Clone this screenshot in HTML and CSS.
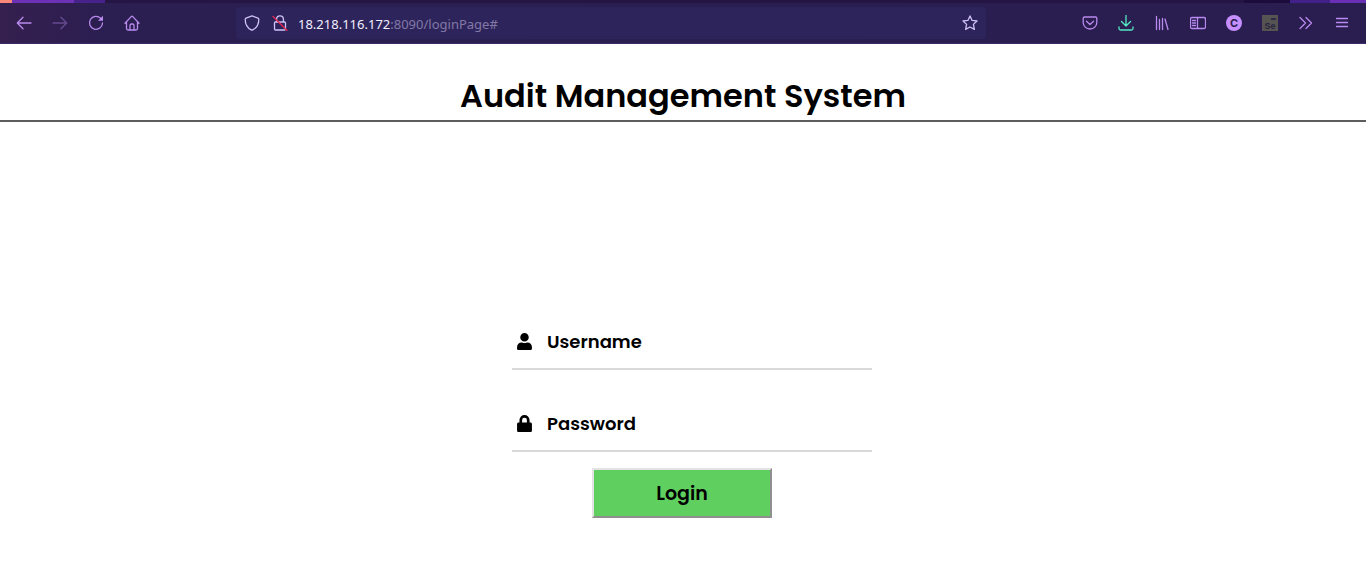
FILE: index.html
```
<!DOCTYPE html>
<html lang="en">
<head>
<meta charset="utf-8">
<meta name="viewport" content="width=device-width, initial-scale=1">
<title>Audit Management System</title>
<link rel="stylesheet" href="styles.css">
</head>
<body>
<nav class="browser" aria-label="Browser toolbar">
  <div class="tab-strip"></div>
  <div class="toolbar">
    <div class="tools">
      <button class="tool" type="button" aria-label="Back"><svg class="icon" viewBox="0 0 16 16"><path d="M15 8H1.500M7 2.300L1.300 8L7 13.700"/></svg></button>
      <button class="tool" type="button" aria-label="Forward" disabled><svg class="icon" viewBox="0 0 16 16"><path d="M1 8h13.500M9 2.300L14.700 8L9 13.700"/></svg></button>
      <button class="tool" type="button" aria-label="Reload"><svg class="icon" viewBox="0 0 16 16"><path d="M12.600 3.200A6.500 6.500 0 1 0 14.500 8"/><path class="solid" d="M15 .8v5h-5z"/></svg></button>
      <button class="tool" type="button" aria-label="Home"><svg class="icon" viewBox="0 0 16 16"><path d="M1 8.200L7.200 1.600q.8-.7 1.600 0L15 8.200M2.500 7v6.500q0 1.500 1.500 1.500h8q1.500 0 1.500-1.500V7M6 15v-4.500q0-1.500 1.500-1.500h1Q10 9 10 10.500V15"/></svg></button>
    </div>
    <div class="address">
      <div class="site-icons">
        <svg class="icon" viewBox="0 0 16 16"><path d="M8 .9l6 2.200q.8.3.8 1.100c0 5-2 8.600-6 10.600q-.8.4-1.600 0c-4-2-6-5.600-6-10.600q0-.8.8-1.100z"/></svg>
        <svg class="icon" viewBox="0 0 16 16"><path d="M4.600 7V4.200a3.400 3.400 0 0 1 6.800 0V7M3.500 7h9q1 0 1 1v6q0 1-1 1h-9q-1 0-1-1V8q0-1 1-1z"/><path class="strike" d="M1 1.500L15 15.500"/></svg>
      </div>
      <p class="url"><span class="host">18.218.116.172</span>:8090/loginPage#</p>
      <button class="star" type="button" aria-label="Bookmark this page"><svg class="icon" viewBox="0 0 16 16"><path d="M8 .9l2.100 4.500 4.900.6-3.600 3.400 1 5L8 12l-4.400 2.400 1-5L1 6l4.900-.6z"/></svg></button>
    </div>
    <div class="tools">
      <button class="tool" type="button" aria-label="Save to Pocket"><svg class="icon" viewBox="0 0 16 16"><path d="M2.500 2h11q1.300 0 1.300 1.300V7.500a6.800 6.500 0 0 1-13.600 0V3.300Q1.200 2 2.500 2zM4.500 6.200L8 9.500l3.500-3.300"/></svg></button>
      <button class="tool downloads" type="button" aria-label="Downloads"><svg class="icon" viewBox="0 0 16 16"><path d="M8 .5v10M3.500 6.500L8 11l4.500-4.500M1 12v1.500Q1 15 2.500 15h11q1.500 0 1.500-1.500V12"/></svg></button>
      <button class="tool" type="button" aria-label="Library"><svg class="icon" viewBox="0 0 16 16"><path d="M2.500 1.500v13M5.500 4.500v10M8.500 3.500v11M11 4L14 14.500"/></svg></button>
      <button class="tool" type="button" aria-label="Sidebars"><svg class="icon" viewBox="0 0 16 16"><path d="M2 2.500h12q1.500 0 1.500 1.500v8q0 1.500-1.500 1.500H2Q.5 13.500.5 12V4Q.5 2.500 2 2.500zM7.500 2.500v11M2.500 5.500h3M2.500 8h3M2.500 10.500h3"/></svg></button>
      <button class="tool" type="button" aria-label="Account"><span class="account">C</span></button>
      <button class="tool" type="button" aria-label="Selenium"><span class="selenium">Se</span></button>
      <button class="tool" type="button" aria-label="More tools"><svg class="icon" viewBox="0 0 16 16"><path d="M2 2.500l5.500 5.500L2 13.500M8 2.500l5.500 5.500L8 13.500"/></svg></button>
      <button class="tool" type="button" aria-label="Menu"><svg class="icon" viewBox="0 0 16 16"><path d="M2.500 3.500h11M2.500 7.500h11M2.500 11.500h11"/></svg></button>
    </div>
  </div>
</nav>
<header class="page-header"><h1 class="title">Audit Management System</h1></header>
<main class="page">
  <form class="login">
    <div class="field">
      <label for="username" aria-label="Username"><svg class="field-icon" viewBox="0 0 448 512"><path d="M224 256a128 128 0 1 0 0-256 128 128 0 0 0 0 256zm90 32h-17a174 174 0 0 1-146 0h-17C60 288 0 348 0 422v42c0 27 21 48 48 48h352c27 0 48-21 48-48v-42c0-74-60-134-134-134z"/></svg></label>
      <input class="entry" id="username" type="text" placeholder="Username">
    </div>
    <div class="field">
      <label for="password" aria-label="Password"><svg class="field-icon" viewBox="0 0 448 512"><path d="M400 224h-24v-72a152 152 0 0 0-304 0v72H48c-27 0-48 21-48 48v192c0 27 21 48 48 48h352c27 0 48-21 48-48V272c0-27-21-48-48-48zm-104 0H152v-72a72 72 0 0 1 144 0z"/></svg></label>
      <input class="entry" id="password" type="password" placeholder="Password">
    </div>
    <button class="submit" type="submit">Login</button>
  </form>
</main>
</body>
</html>
```
FILE: styles.css
```
* {
  box-sizing: border-box;
}

body {
  margin: 0;
  background: #fff;
  color: #000;
  font-family: Poppins, Inter, sans-serif;
}

button {
  padding: 0;
  border: 0;
  background: none;
  color: inherit;
}

.browser {
  color: #b98aef;
  background: linear-gradient(90deg, #35204f, #2b1e50 100px, #2a1d4f);
  border-bottom: 1px solid #3b2b68;
}

.tab-strip {
  height: 3px;
  background: linear-gradient(90deg, #fb8778 12px, #6c31b4 12px 74px, #47228a 74px 105px, #251545 105px calc(100% - 122px), #1c0c3d calc(100% - 122px) calc(100% - 76px), #42208a calc(100% - 76px) calc(100% - 36px), #6930b5 calc(100% - 36px));
}

.toolbar {
  display: flex;
  align-items: center;
  height: 40px;
  padding: 0 6px;
}

.tools {
  display: flex;
}

.tool {
  display: flex;
  align-items: center;
  justify-content: center;
  width: 36px;
  height: 32px;
}

.tool:disabled {
  opacity: 0.4;
}

.downloads {
  color: #54e8c4;
}

.icon {
  display: block;
  flex: none;
  width: 16px;
  height: 16px;
  fill: none;
  stroke: currentColor;
  stroke-width: 1.3;
  stroke-linecap: round;
  stroke-linejoin: round;
}

.solid {
  fill: currentColor;
  stroke: none;
}

.strike {
  stroke: #e22850;
}

.address {
  display: flex;
  flex: 1;
  align-items: center;
  gap: 10px;
  min-width: 0;
  height: 32px;
  margin: 0 86px;
  padding: 0 8px;
  border-radius: 4px;
  background: #2e245c;
  color: #cfc3f5;
}

.site-icons {
  display: flex;
  gap: 12px;
}

.url {
  flex: 1;
  margin: 0;
  padding-top: 2px;
  overflow: hidden;
  color: #8279a6;
  font: 13px/20px "Noto Sans", sans-serif;
  white-space: nowrap;
}

.host {
  color: #f2effc;
}

.account {
  width: 16px;
  height: 16px;
  border-radius: 50%;
  background: #c78eff;
  color: #2a1d4f;
  font: bold 11px/16px Inter, sans-serif;
}

.selenium {
  width: 16px;
  height: 16px;
  padding-top: 6px;
  background: linear-gradient(#302b45, #302b45) 9px 3px / 5px 2px no-repeat #565453;
  color: #282340;
  font: bold 9px/10px "Liberation Sans", sans-serif;
}

.page-header {
  padding: 28px 16px 0;
  border-bottom: 2px solid #5c5c5c;
  text-align: center;
}

.title {
  margin: 0;
  font-size: 32px;
  font-weight: 600;
  line-height: 48px;
}

.page {
  padding: 192px 18px 48px 16px;
}

.login {
  display: flex;
  flex-direction: column;
  align-items: center;
  max-width: 380px;
  margin: 0 auto;
}

.field {
  display: flex;
  align-self: stretch;
  align-items: center;
  gap: 15px;
  height: 56px;
  margin: 0 0 26px 20px;
  padding-left: 5px;
  border-bottom: 2px solid #d9d9d9;
}

.field-icon {
  display: block;
  width: 15px;
  height: 17px;
}

.entry {
  flex: 1;
  min-width: 0;
  padding: 2px 0 0;
  border: 0;
  outline: 0;
  background: none;
  color: #000;
  font: 600 18px/28px Poppins, Inter, sans-serif;
}

.entry::placeholder {
  color: #000;
  opacity: 1;
}

.field + .field {
  margin-bottom: 16px;
}

.submit {
  width: 180px;
  height: 50px;
  padding-top: 2px;
  border: 2px outset #e3e3e3;
  background: #5fd05f;
  color: #000;
  font: 600 19px/28px Poppins, Inter, sans-serif;
}
```
